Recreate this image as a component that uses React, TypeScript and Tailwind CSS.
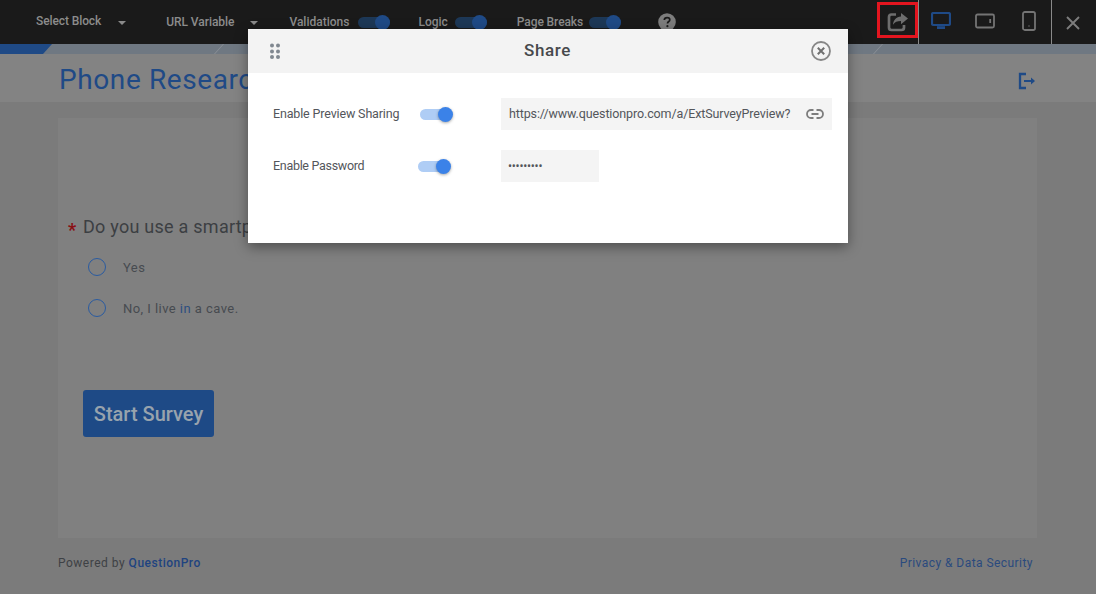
import React from "react";

function Caret({ className }: { className: string }) {
  return <span className={"w-0 h-0 border-x-[4px] border-x-transparent border-t-[4px] border-t-[#8a8a8a] mt-[2px] " + className} />;
}

function TopToggle({ className }: { className: string }) {
  return (
    <span className={"relative block w-[32px] h-[11px] rounded-full bg-[#1d3857] " + className}>
      <span className="absolute right-0 top-[-2px] w-[15px] h-[15px] rounded-full bg-[#1f4a86]" />
    </span>
  );
}

function ModalToggle() {
  return (
    <span className="relative block w-[27px] h-[11px] rounded-full bg-[#afcdf5]">
      <span className="absolute right-[-6px] top-[-2px] w-[15px] h-[15px] rounded-full bg-[#3b82e8] shadow-[0_1px_3px_rgba(0,0,0,0.35)]" />
    </span>
  );
}

function Radio({ label, className }: { label: React.ReactNode; className: string }) {
  return (
    <div className={"flex items-center " + className}>
      <span className="w-[18px] h-[18px] rounded-full border border-[#2a5ba0]" />
      <span className="ml-[17px] text-[13px] tracking-[0.45px] text-[#474b50] leading-none">{label}</span>
    </div>
  );
}

export default function App() {
  return (
    <div className="relative w-[1096px] h-[594px] overflow-hidden bg-[#7b7b7b] font-['Roboto','Liberation_Sans',sans-serif]">
      {/* Top bar */}
      <header className="flex items-center h-[44px] bg-[#1a1a1a] text-[12px] text-[#8c8c8c] font-medium">
        <span className="ml-[36px] mb-[2px] tracking-[-0.1px]">Select Block</span>
        <Caret className="ml-[17px]" />
        <span className="ml-[40px] tracking-[-0.05px]">URL Variable</span>
        <Caret className="ml-[16px]" />
        <span className="ml-[31px]">Validations</span>
        <TopToggle className="ml-[9px]" />
        <span className="ml-[28px]">Logic</span>
        <TopToggle className="ml-[7px]" />
        <span className="ml-[30px] tracking-[-0.1px]">Page Breaks</span>
        <TopToggle className="ml-[6px]" />
        <svg className="ml-[37px]" width="18" height="18" viewBox="0 0 18 18">
          <circle cx="9" cy="9" r="8.8" fill="#7d7d7d" />
          <path d="M6.300 7c.1-1.600 1.200-2.400 2.800-2.400s2.700.9 2.700 2.200c0 1-.6 1.500-1.300 2-.7.5-1 .8-1 1.600" fill="none" stroke="#1a1a1a" strokeWidth="1.700" />
          <circle cx="9.400" cy="13.200" r="1.100" fill="#1a1a1a" />
        </svg>
        <div className="ml-auto flex h-full items-stretch">
          <div className="flex items-center justify-center w-[41px] h-[36px] mt-[2px] border-[3px] border-[#e3151f]">
            <svg className="mt-[3px] ml-[1px]" width="22" height="20" viewBox="0 0 22 20" fill="none">
              <path d="M9 2.500H4.500a2.500 2.500 0 0 0-2.500 2.500v10.500a2.500 2.500 0 0 0 2.500 2.500h10a2.500 2.500 0 0 0 2.500-2.500V13" stroke="#6e6e6e" strokeWidth="2.700" />
              <path d="M14 1l7 5.600-7 5.600V9c-3.800 0-6.300 1-8 3.800C6.300 8 9.300 5 14 4.500z" fill="#6e6e6e" />
            </svg>
          </div>
          <div className="w-px bg-[#8a8a8a]" />
          <div className="flex items-center w-[132px]">
            <svg className="ml-[12px] mb-[3px]" width="20" height="17" viewBox="0 0 20 17" fill="none">
              <rect x="1" y="1" width="18" height="12" rx="1.500" stroke="#1f4a86" strokeWidth="2.200" />
              <path d="M6 15.600h8" stroke="#1f4a86" strokeWidth="2.800" />
            </svg>
            <svg className="ml-[24px] mb-[3px]" width="20" height="16" viewBox="0 0 20 16" fill="none">
              <rect x="1" y="1.500" width="18" height="13" rx="1.500" stroke="#747474" strokeWidth="1.800" />
              <path d="M15.200 6v4" stroke="#747474" strokeWidth="1.800" />
            </svg>
            <svg className="ml-[27px] mb-[3px]" width="14" height="20" viewBox="0 0 14 20" fill="none">
              <rect x="1" y="1" width="12" height="18" rx="1.800" stroke="#747474" strokeWidth="1.800" />
              <path d="M6.300 15h1.400" stroke="#5a5a5a" strokeWidth="1.400" />
            </svg>
          </div>
          <div className="w-px bg-[#8a8a8a]" />
          <div className="flex flex-1 items-center w-[44px]">
            <svg className="ml-[14px] mt-[1px]" width="14" height="14" viewBox="0 0 14 14" fill="none">
              <path d="M1 1l12 12M13 1L1 13" stroke="#7d7d7d" strokeWidth="1.900" />
            </svg>
          </div>
        </div>
      </header>

      {/* Progress strip */}
      <div className="flex h-[10px] bg-[#6f7882]">
        <div className="w-[52px] h-full bg-[#1f4a86] [clip-path:polygon(0_0,100%_0,calc(100%-9px)_100%,0_100%)]" />
        <div className="ml-[162px] w-[10px] h-full bg-[#8b9097] [clip-path:polygon(90%_0,100%_0,10%_100%,0_100%)]" />
        <div className="ml-[649px] w-[10px] h-full bg-[#8b9097] [clip-path:polygon(90%_0,100%_0,10%_100%,0_100%)]" />
      </div>

      {/* Survey header */}
      <div className="flex items-center justify-between h-[48px] pl-[59px] pr-[60px] bg-[#838383]">
        <h1 className="text-[28px] leading-none tracking-[0.6px] text-[#1f4a86] mt-[3px] whitespace-nowrap">Phone Research</h1>
        <svg className="mt-[6px]" width="18" height="18" viewBox="0 0 18 18" fill="none">
          <path d="M8 2H2v14h6" stroke="#1f4a86" strokeWidth="2.300" />
          <path d="M6 9h9" stroke="#1f4a86" strokeWidth="2" />
          <path d="M13 5.500L17 9l-4 3.500z" fill="#1f4a86" />
        </svg>
      </div>

      {/* Survey card */}
      <main className="ml-[58px] mt-[16px] w-[979px] h-[420px] bg-[#808080] pl-[10px] pt-[98px]">
        <div className="flex items-center h-[22px]">
          <span className="text-[18px] leading-none font-bold text-[#8a0f14] mt-[5px] w-[15px]">*</span>
          <span className="text-[18px] tracking-[0.25px] text-[#3c3f43] leading-none whitespace-nowrap">Do you use a smartphone?</span>
        </div>
        <Radio className="ml-[20px] mt-[20px]" label="Yes" />
        <Radio className="ml-[20px] mt-[23px]" label={<>No, I live <span className="text-[#2d4f80]">in</span> a cave.</>} />
        <button className="block ml-[15px] mt-[73px] w-[131px] h-[47px] rounded-[3px] bg-[#1e4a86] text-[20px] text-[#98a3ad] font-medium">Start Survey</button>
      </main>

      {/* Footer */}
      <footer className="flex justify-between ml-[58px] mr-[63px] mt-[18px] text-[12px] leading-[14px]">
        <span className="text-[#3e4145] tracking-[0.5px]">Powered by <span className="text-[#1f4480] font-medium">QuestionPro</span></span>
        <span className="text-[#2a4a7e] tracking-[0.45px]">Privacy &amp; Data Security</span>
      </footer>

      {/* Share dialog */}
      <div className="absolute left-[248px] top-[29px] w-[600px] h-[214px] bg-white shadow-[0_4px_12px_rgba(0,0,0,0.4)]">
        <div className="flex items-center justify-between h-[44px] bg-[#f3f3f3] pl-[22px] pr-[17px]">
          <svg width="10" height="16" viewBox="0 0 10 16" fill="#808890">
            <circle cx="2" cy="2.500" r="2" /><circle cx="8" cy="2.500" r="2" />
            <circle cx="2" cy="8.500" r="2" /><circle cx="8" cy="8.500" r="2" />
            <circle cx="2" cy="14" r="2" /><circle cx="8" cy="14" r="2" />
          </svg>
          <span className="ml-[4px] text-[17px] font-medium text-[#47494c] tracking-[0.6px]">Share</span>
          <svg width="20" height="20" viewBox="0 0 20 20" fill="none">
            <circle cx="10" cy="10" r="9" stroke="#868686" strokeWidth="1.800" />
            <path d="M6.800 6.800l6.400 6.400M13.200 6.800l-6.400 6.400" stroke="#6f6f6f" strokeWidth="2" />
          </svg>
        </div>
        <div className="flex items-center mt-[25px] h-[32px] pl-[25px]">
          <span className="w-[147px] text-[12.5px] tracking-[-0.15px] text-[#53565b]">Enable Preview Sharing</span>
          <ModalToggle />
          <div className="flex items-center justify-between ml-[54px] w-[331px] h-[32px] bg-[#f4f4f4] pl-[8px] pr-[8px]">
            <span className="text-[12.5px] tracking-[-0.12px] text-[#53565b] whitespace-nowrap">https://www.questionpro.com/a/ExtSurveyPreview?</span>
            <svg width="18" height="10" viewBox="0 0 18 10" fill="none">
              <path d="M7.500 1H5a4 4 0 0 0 0 8h2.500M10.500 1H13a4 4 0 0 1 0 8h-2.500M5.500 5h7" stroke="#7d7d7d" strokeWidth="1.800" />
            </svg>
          </div>
        </div>
        <div className="flex items-center mt-[20px] h-[32px] pl-[25px]">
          <span className="w-[145px] text-[12.5px] tracking-[-0.3px] text-[#53565b]">Enable Password</span>
          <ModalToggle />
          <div className="flex items-center ml-[56px] w-[98px] h-[32px] bg-[#f4f4f4] pl-[7px] text-[12px] text-[#53565b] tracking-[-0.25px]">•••••••••</div>
        </div>
      </div>
    </div>
  );
}
